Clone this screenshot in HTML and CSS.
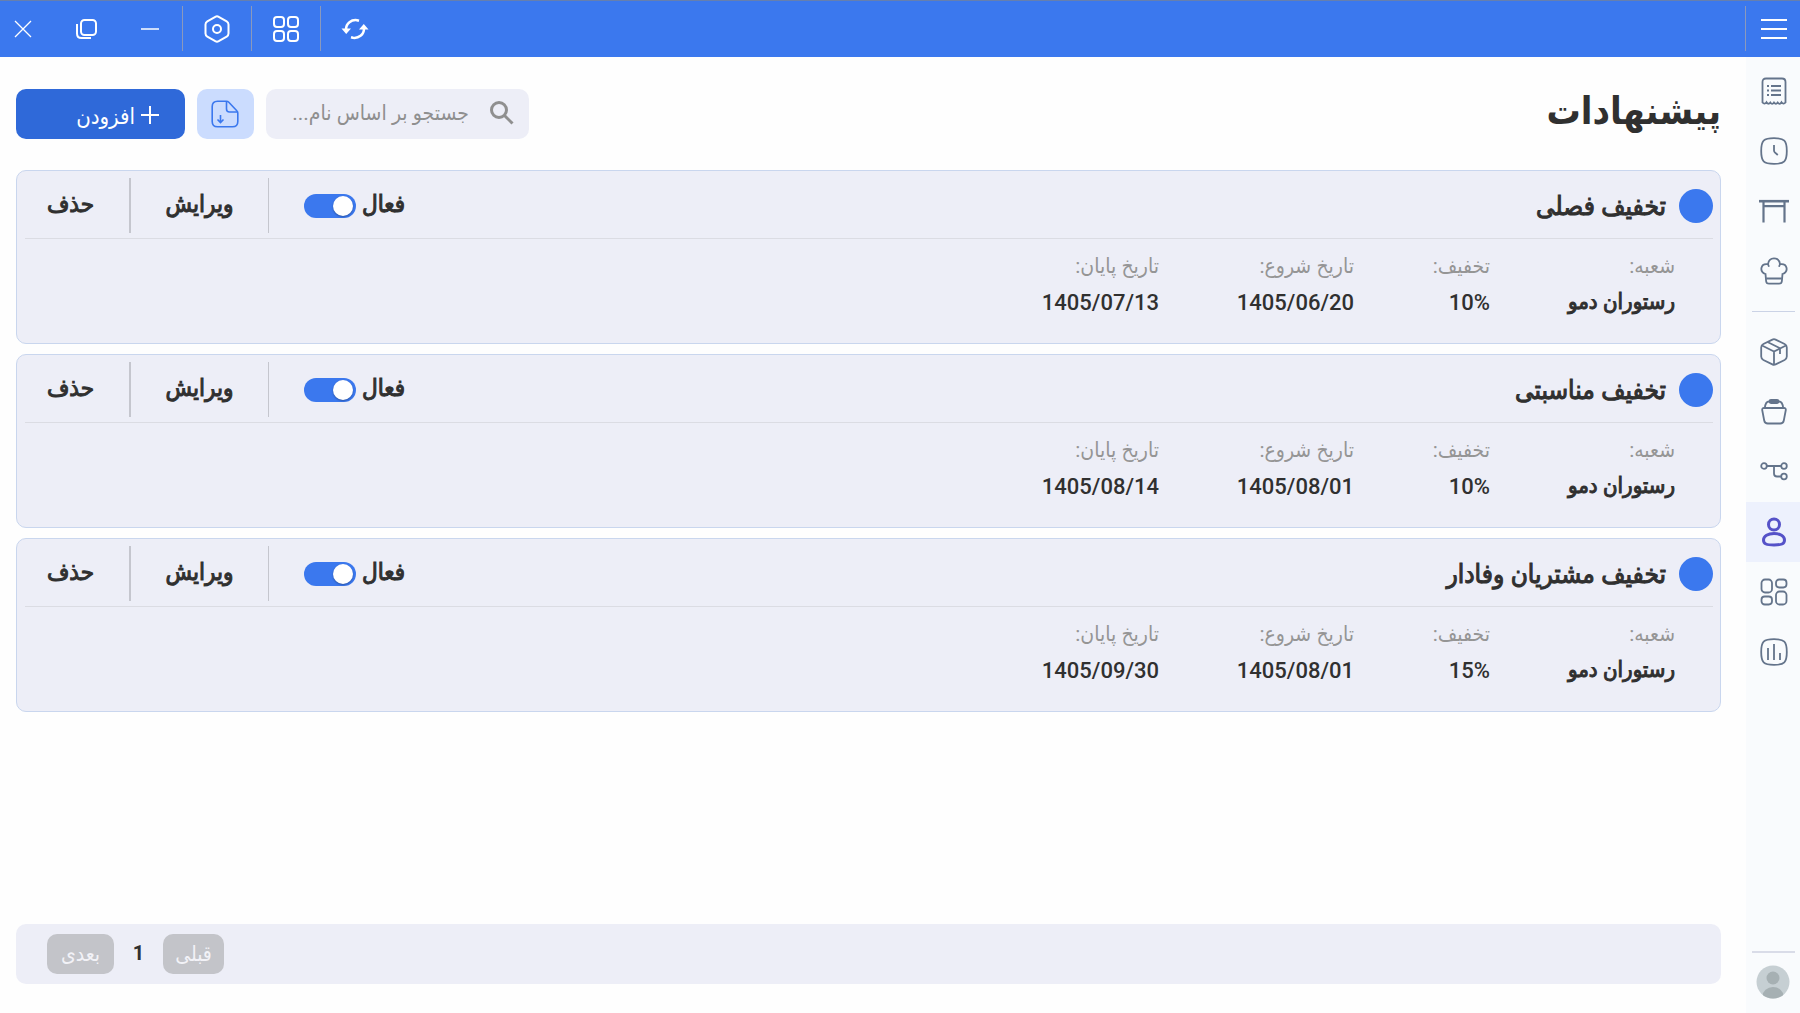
FILE: index.html
```html
<!DOCTYPE html>
<html lang="fa" dir="rtl">
<head>
  <meta charset="UTF-8" />
  <meta name="viewport" content="width=device-width, initial-scale=1.0">
  <title>پیشنهادات</title>
  <link rel="stylesheet" href="styles.css">
</head>
<body>
  <header class="topbar">
    <button class="top-btn menu-btn" aria-label="منو">
      <svg width="26" height="22" viewBox="0 0 26 22"><path d="M0 2h26M0 11h26M0 20h26" stroke-width="2"/></svg>
    </button>
    <div class="top-actions">
      <button class="top-btn" aria-label="بارگذاری مجدد">
        <svg width="28" height="24" viewBox="0 0 28 24"><path d="M5 12.500C5 6 10.500 2.500 16 3.200l2 .6M23 11.500C23 18 17.500 21.500 12 20.800l-2-.6" stroke-width="2.500"/><path class="solid" d="M.5 11.500h9.500l-4.800 5.500zM18 12.500h9.500l-4.700-5.500z"/></svg>
      </button>
      <button class="top-btn" aria-label="برنامه‌ها">
        <svg width="28" height="28" viewBox="0 0 28 28"><rect x="2" y="2" width="10" height="10" rx="3"/><rect x="16" y="2" width="10" height="10" rx="3"/><rect x="2" y="16" width="10" height="10" rx="3"/><rect x="16" y="16" width="10" height="10" rx="3"/></svg>
      </button>
      <button class="top-btn" aria-label="تنظیمات">
        <svg width="28" height="28" viewBox="0 0 28 28"><path d="M12.300 1.800q1.700-.9 3.400 0l8 4.500q1.800 1.100 1.800 3.100v9.200q0 2-1.800 3.100l-8 4.500q-1.700.9-3.400 0l-8-4.500q-1.800-1.100-1.800-3.100V9.400q0-2 1.800-3.100z"/><circle cx="14" cy="14" r="4"/></svg>
      </button>
    </div>
    <div class="window-actions">
      <button class="top-btn" aria-label="کوچک کردن">
        <svg width="18" height="18" viewBox="0 0 18 18"><path d="M0 9h18" stroke-width="1.500"/></svg>
      </button>
      <button class="top-btn" aria-label="بازگردانی">
        <svg width="22" height="22" viewBox="0 0 22 22"><rect x="6" y="2" width="15" height="15" rx="3.500"/><path d="M2 6v9.500Q2 20 6.500 20H16"/></svg>
      </button>
      <button class="top-btn close-btn" aria-label="بستن">
        <svg width="18" height="18" viewBox="0 0 18 18"><path d="M1 1l16 16M17 1L1 17" stroke-width="1.300"/></svg>
      </button>
    </div>
  </header>

  <div class="layout">
    <nav class="sidebar">
      <a href="#" class="nav-item" aria-label="سفارش‌ها">
        <svg width="28" height="28" viewBox="0 0 28 28"><path d="M2.500 25.500V5q0-3.500 3.500-3.500h16q3.500 0 3.500 3.500v20.500q-2 2.300-4-.3-1.800 3-3.800.3-1.800 2.500-3.700 0-1.800 2.700-3.700 0-2 2.600-3.800-.3-2 2.700-4 .3z"/><path d="M11 9h10M11 13.500h10M11 18h10M7 9h2M7 13.500h2M7 18h2" stroke-width="2"/></svg>
      </a>
      <a href="#" class="nav-item" aria-label="تاریخچه">
        <svg width="28" height="28" viewBox="0 0 28 28"><path d="M14 1.200c10.500 0 12.800 2.300 12.800 12.800S24.500 26.800 14 26.800 1.200 24.500 1.200 14 3.500 1.200 14 1.200z"/><path d="M14 8v5.500q0 1 .8 1.800l3 2.700"/></svg>
      </a>
      <a href="#" class="nav-item" aria-label="میزها">
        <svg width="30" height="24" viewBox="0 0 30 24"><path d="M0 2.200h30" stroke-width="2.600"/><path d="M4.500 3v20.500M25.500 3v20.500M4 7.200h22" stroke-width="2.200"/></svg>
      </a>
      <a href="#" class="nav-item" aria-label="آشپزخانه">
        <svg width="28" height="28" viewBox="0 0 28 28"><path d="M5.500 17C-1 14.500.5 6 8 7.200 9-.6 19 -.6 20 7.200 27.500 6 29 14.500 22.500 17l-.6 7q-.2 2.700-2.900 2.700H9q-2.700 0-2.900-2.700z"/><path d="M8 7.200l1 2.600M20 7.200l-1 2.600M6.200 21.500h15.600"/></svg>
      </a>
      <hr class="nav-line">
      <a href="#" class="nav-item" aria-label="انبار">
        <svg width="28" height="28" viewBox="0 0 28 28"><path d="M12.400 1.600q1.600-.8 3.200 0l9 4.400q2.200 1.200 2.200 3.400v9.200q0 2.200-2.200 3.400l-9 4.400q-1.600.8-3.200 0l-9-4.400q-2.200-1.200-2.200-3.400V9.400Q1.200 7.200 3.400 6z"/><path d="M2 7.500l12 6 12-6M14 13.500V27M7.500 4l12.500 6.200V16"/></svg>
      </a>
      <a href="#" class="nav-item" aria-label="سبد">
        <svg width="28" height="28" viewBox="0 0 28 28"><path d="M4 10h20q2 0 1.800 2l-2 10.500q-.6 3-3.600 3H7.800q-3 0-3.600-3L2.200 12Q2 10 4 10z"/><path d="M4.800 10Q5.500 3.500 9 3.500h10q3.500 0 4.200 6.500"/><rect x="9.500" y="2" width="9" height="3" rx="1.500"/></svg>
      </a>
      <a href="#" class="nav-item" aria-label="شعب">
        <svg width="28" height="20" viewBox="0 0 28 20"><circle cx="4" cy="4" r="2.800"/><circle cx="24" cy="4" r="2.800"/><circle cx="24" cy="14.500" r="2.800"/><path d="M7 4h14M14 4v7.500q0 3 3 3h4"/></svg>
      </a>
      <a href="#" class="nav-item active" aria-label="مشتریان">
        <svg width="28" height="30" viewBox="0 0 28 30"><circle cx="14" cy="7.500" r="5.500"/><path d="M14 16.500c6 0 10.500 2.500 10.500 6.500 0 4-3 5-10.500 5S3.500 27 3.500 23c0-4 4.500-6.500 10.500-6.500z"/></svg>
      </a>
      <a href="#" class="nav-item" aria-label="داشبورد">
        <svg width="28" height="28" viewBox="0 0 28 28"><rect x="1.500" y="1.500" width="10.500" height="13" rx="3.500"/><rect x="16" y="1.500" width="10.500" height="8" rx="3.200"/><rect x="1.500" y="18.500" width="10.500" height="8" rx="3.200"/><rect x="16" y="13.500" width="10.500" height="13" rx="3.500"/></svg>
      </a>
      <a href="#" class="nav-item" aria-label="گزارش‌ها">
        <svg width="28" height="28" viewBox="0 0 28 28"><path d="M14 1.200c10.500 0 12.800 2.300 12.800 12.800S24.500 26.800 14 26.800 1.200 24.500 1.200 14 3.500 1.200 14 1.200z"/><path d="M8 10v12M14 6v16M20 15v7"/></svg>
      </a>
      <a href="#" class="profile" aria-label="حساب کاربری">
        <svg width="34" height="34" viewBox="0 0 34 34"><clipPath id="face"><circle cx="17" cy="17" r="16.500"/></clipPath><g clip-path="url(#face)"><path fill="#c6cfd3" d="M0 0h34v34H0z"/><circle cx="17" cy="13" r="6.500" fill="#a6b0b3"/><ellipse cx="17" cy="31" rx="10.500" ry="9" fill="#a6b0b3"/></g></svg>
      </a>
    </nav>

    <main class="content">
      <div class="toolbar">
        <h1>پیشنهادات</h1>
        <label class="search">
          <svg width="26" height="26" viewBox="0 0 26 26"><circle cx="10" cy="9" r="7.500"/><path d="M15.500 14.500l8 8"/></svg>
          <input type="text" placeholder="جستجو بر اساس نام..." aria-label="جستجو">
        </label>
        <button class="export-btn" aria-label="خروجی">
          <svg width="28" height="28" viewBox="0 0 28 28"><path d="M15.500 1.200H6.500q-5.300 0-5.300 5.300v15q0 5.300 5.300 5.300h15q5.300 0 5.300-5.300v-8.500q0-1.200-1-2.200l-8-8.500q-1-1.100-2.300-1.100z"/><path d="M15.500 1.200V9q0 3 3 3h8M9.500 15v7.500M6.500 19.500l3 3 3-3"/></svg>
        </button>
        <button class="add-btn">
          <svg width="18" height="18" viewBox="0 0 18 18"><path d="M9 0v18M0 9h18"/></svg>
          <span>افزودن</span>
        </button>
      </div>

      <section class="offers">
        <article class="card">
          <div class="card-head">
            <span class="dot"></span>
            <h2>تخفیف فصلی</h2>
            <label class="switch"><span>فعال</span><input type="checkbox" checked></label>
            <button class="edit-btn">ویرایش</button>
            <button class="delete-btn">حذف</button>
          </div>
          <dl class="card-body">
            <div><dt>شعبه:</dt><dd>رستوران دمو</dd></div>
            <div><dt>تخفیف:</dt><dd class="num">10%</dd></div>
            <div><dt>تاریخ شروع:</dt><dd class="num">1405/06/20</dd></div>
            <div><dt>تاریخ پایان:</dt><dd class="num">1405/07/13</dd></div>
          </dl>
        </article>

        <article class="card">
          <div class="card-head">
            <span class="dot"></span>
            <h2>تخفیف مناسبتی</h2>
            <label class="switch"><span>فعال</span><input type="checkbox" checked></label>
            <button class="edit-btn">ویرایش</button>
            <button class="delete-btn">حذف</button>
          </div>
          <dl class="card-body">
            <div><dt>شعبه:</dt><dd>رستوران دمو</dd></div>
            <div><dt>تخفیف:</dt><dd class="num">10%</dd></div>
            <div><dt>تاریخ شروع:</dt><dd class="num">1405/08/01</dd></div>
            <div><dt>تاریخ پایان:</dt><dd class="num">1405/08/14</dd></div>
          </dl>
        </article>

        <article class="card">
          <div class="card-head">
            <span class="dot"></span>
            <h2>تخفیف مشتریان وفادار</h2>
            <label class="switch"><span>فعال</span><input type="checkbox" checked></label>
            <button class="edit-btn">ویرایش</button>
            <button class="delete-btn">حذف</button>
          </div>
          <dl class="card-body">
            <div><dt>شعبه:</dt><dd>رستوران دمو</dd></div>
            <div><dt>تخفیف:</dt><dd class="num">15%</dd></div>
            <div><dt>تاریخ شروع:</dt><dd class="num">1405/08/01</dd></div>
            <div><dt>تاریخ پایان:</dt><dd class="num">1405/09/30</dd></div>
          </dl>
        </article>
      </section>

      <div class="pagination">
        <button class="prev-btn" disabled>قبلی</button>
        <span class="page">1</span>
        <button class="next-btn" disabled>بعدی</button>
      </div>
    </main>
  </div>
</body>
</html>
```
FILE: styles.css
```css
:root {
  --primary: #3b78ee;
  --primary-dark: #2f69d9;
  --panel: #edeef7;
  --panel-border: #c9d6ee;
  --text: #303030;
  --muted: #959595;
  --icon: #64748b;
}
* {
  box-sizing: border-box;
}
body {
  margin: 0;
  min-height: 100vh;
  display: flex;
  flex-direction: column;
  font-family: Roboto, "DejaVu Sans Condensed", "DejaVu Sans", sans-serif;
  font-size: 22px;
  color: var(--text);
  background: #fefefe;
}
button {
  border: none;
  padding: 0;
  background: none;
  font: inherit;
  color: inherit;
  cursor: pointer;
}
svg {
  display: block;
  flex: none;
  fill: none;
  stroke: currentColor;
  stroke-width: 2;
}

/* top bar */
.topbar {
  display: flex;
  height: 57px;
  padding: 5px 0 6px;
  border-top: 1px solid #667fae;
  background: var(--primary);
  color: #fff;
}
.top-btn {
  width: 69px;
  display: flex;
  align-items: center;
  justify-content: center;
}
.top-btn .solid {
  fill: currentColor;
  stroke: none;
}
.menu-btn {
  width: 55px;
  padding-left: 2px;
  border-left: 1px solid #8a99bd;
}
.top-actions {
  display: flex;
  margin-right: auto;
}
.top-actions .top-btn {
  border-left: 1px solid #8a99bd;
}
.window-actions {
  display: flex;
}
.window-actions .top-btn {
  width: 64px;
}
.window-actions .close-btn {
  width: 54px;
  padding-right: 8px;
}

.layout {
  flex: 1;
  display: flex;
}

/* sidebar */
.sidebar {
  flex: none;
  width: 54px;
  display: flex;
  flex-direction: column;
  padding: 4px 0 14px;
  background: #f9fbfd;
}
.nav-item {
  height: 60px;
  display: flex;
  align-items: center;
  justify-content: center;
  padding-left: 2px;
  color: var(--icon);
}
.nav-item svg {
  stroke-width: 1.8;
}
.nav-item.active {
  background: #edf1fd;
  color: #5552c8;
}
.nav-item.active svg {
  stroke-width: 3;
}
.nav-line {
  width: 43px;
  height: 1px;
  margin: 10px auto;
  border: none;
  background: #cbd3e6;
}
.profile {
  width: 43px;
  margin: auto auto 0;
  padding-top: 12px;
  border-top: 2px solid #d9dce8;
}
.profile svg {
  margin: 0 auto;
  stroke: none;
}

/* content */
.content {
  flex: 1;
  display: flex;
  flex-direction: column;
  padding: 32px 25px 29px 16px;
}
.toolbar {
  display: flex;
  align-items: center;
  gap: 12px;
  height: 50px;
}
h1 {
  margin: 0 0 0 auto;
  padding-bottom: 6px;
  font-size: 38px;
  line-height: 44px;
}
.search {
  width: 263px;
  height: 50px;
  display: flex;
  align-items: center;
  gap: 20px;
  padding: 0 14px;
  border-radius: 10px;
  background: var(--panel);
  color: #8f8f8f;
}
.search svg {
  stroke-width: 3;
}
.search input {
  flex: 1;
  min-width: 0;
  padding: 0 0 2px;
  border: none;
  outline: none;
  background: none;
  font: inherit;
  font-size: 21px;
  color: var(--text);
}
.search input::placeholder {
  color: #8f8f8f;
  opacity: 1;
}
.export-btn {
  width: 57px;
  height: 50px;
  display: flex;
  align-items: center;
  justify-content: center;
  padding-right: 2px;
  border-radius: 10px;
  background: #cbdcfe;
  color: var(--primary);
}
.export-btn svg {
  stroke-width: 1.6;
}
.add-btn {
  width: 169px;
  height: 50px;
  display: flex;
  align-items: center;
  gap: 6px;
  padding: 2px 26px 0 0;
  border-radius: 10px;
  background: var(--primary-dark);
  color: #fff;
}
.add-btn span {
  padding-top: 2px;
}

/* offers */
.offers {
  display: flex;
  flex-direction: column;
  gap: 10px;
  margin-top: 31px;
}
.card {
  height: 174px;
  padding: 0 7px 0 8px;
  border: 1px solid var(--panel-border);
  border-radius: 10px;
  background: var(--panel);
}
.card-head {
  display: flex;
  align-items: center;
  height: 68px;
  padding-top: 2px;
  border-bottom: 1px solid #dbdce3;
}
.dot {
  width: 34px;
  height: 34px;
  border-radius: 50%;
  background: var(--primary);
}
/* medium weight, between book and bold */
h2, .switch, .edit-btn, .delete-btn, dd {
  font-weight: normal;
  -webkit-text-stroke: 1px currentColor;
}
h2 {
  margin: 0 13px 0 auto;
  font-size: 26px;
  line-height: 34px;
}
.switch {
  display: flex;
  align-items: center;
  gap: 6px;
  padding-left: 35px;
  font-size: 24px;
  cursor: pointer;
}
.switch span {
  padding-bottom: 4px;
}
.switch input {
  appearance: none;
  width: 52px;
  height: 24px;
  margin: 0;
  padding: 2px 3px;
  border-radius: 12px;
  background: var(--primary);
}
.switch input::before {
  content: "";
  display: block;
  width: 20px;
  height: 20px;
  border-radius: 50%;
  background: #fff;
  box-shadow: 0 1px 2px rgba(0, 0, 0, 0.3);
}
.edit-btn, .delete-btn {
  height: 55px;
  padding-bottom: 4px;
  border-right: 1px solid #c5c6ce;
  font-size: 24px;
}
.edit-btn {
  width: 138px;
}
.delete-btn {
  width: 106px;
  padding-left: 13px;
  padding-right: 26px;
  border-right-width: 2px;
}
.card-body {
  display: grid;
  grid-template-columns: 109px 60px 119px 119px;
  gap: 76px;
  margin: 0;
  padding: 10px 38px 0;
}
dt {
  color: var(--muted);
  font-size: 21px;
  line-height: 34px;
  white-space: nowrap;
}
dd {
  margin: 0;
  line-height: 38px;
  white-space: nowrap;
}
dd.num {
  font-weight: 500;
  -webkit-text-stroke: 0;
  line-height: 40px;
  direction: ltr;
  text-align: right;
}

/* pagination */
.pagination {
  display: flex;
  align-items: center;
  justify-content: flex-end;
  height: 60px;
  margin-top: auto;
  padding-left: 31px;
  border-radius: 10px;
  background: var(--panel);
}
.pagination button {
  height: 40px;
  border-radius: 10px;
  background: #c3c4c9;
  color: #f2f2f7;
  font-size: 21px;
  cursor: default;
}
.prev-btn {
  width: 61px;
}
.next-btn {
  width: 67px;
}
.page {
  width: 49px;
  padding-bottom: 2px;
  text-align: center;
  font-size: 20px;
  font-weight: bold;
}
```
